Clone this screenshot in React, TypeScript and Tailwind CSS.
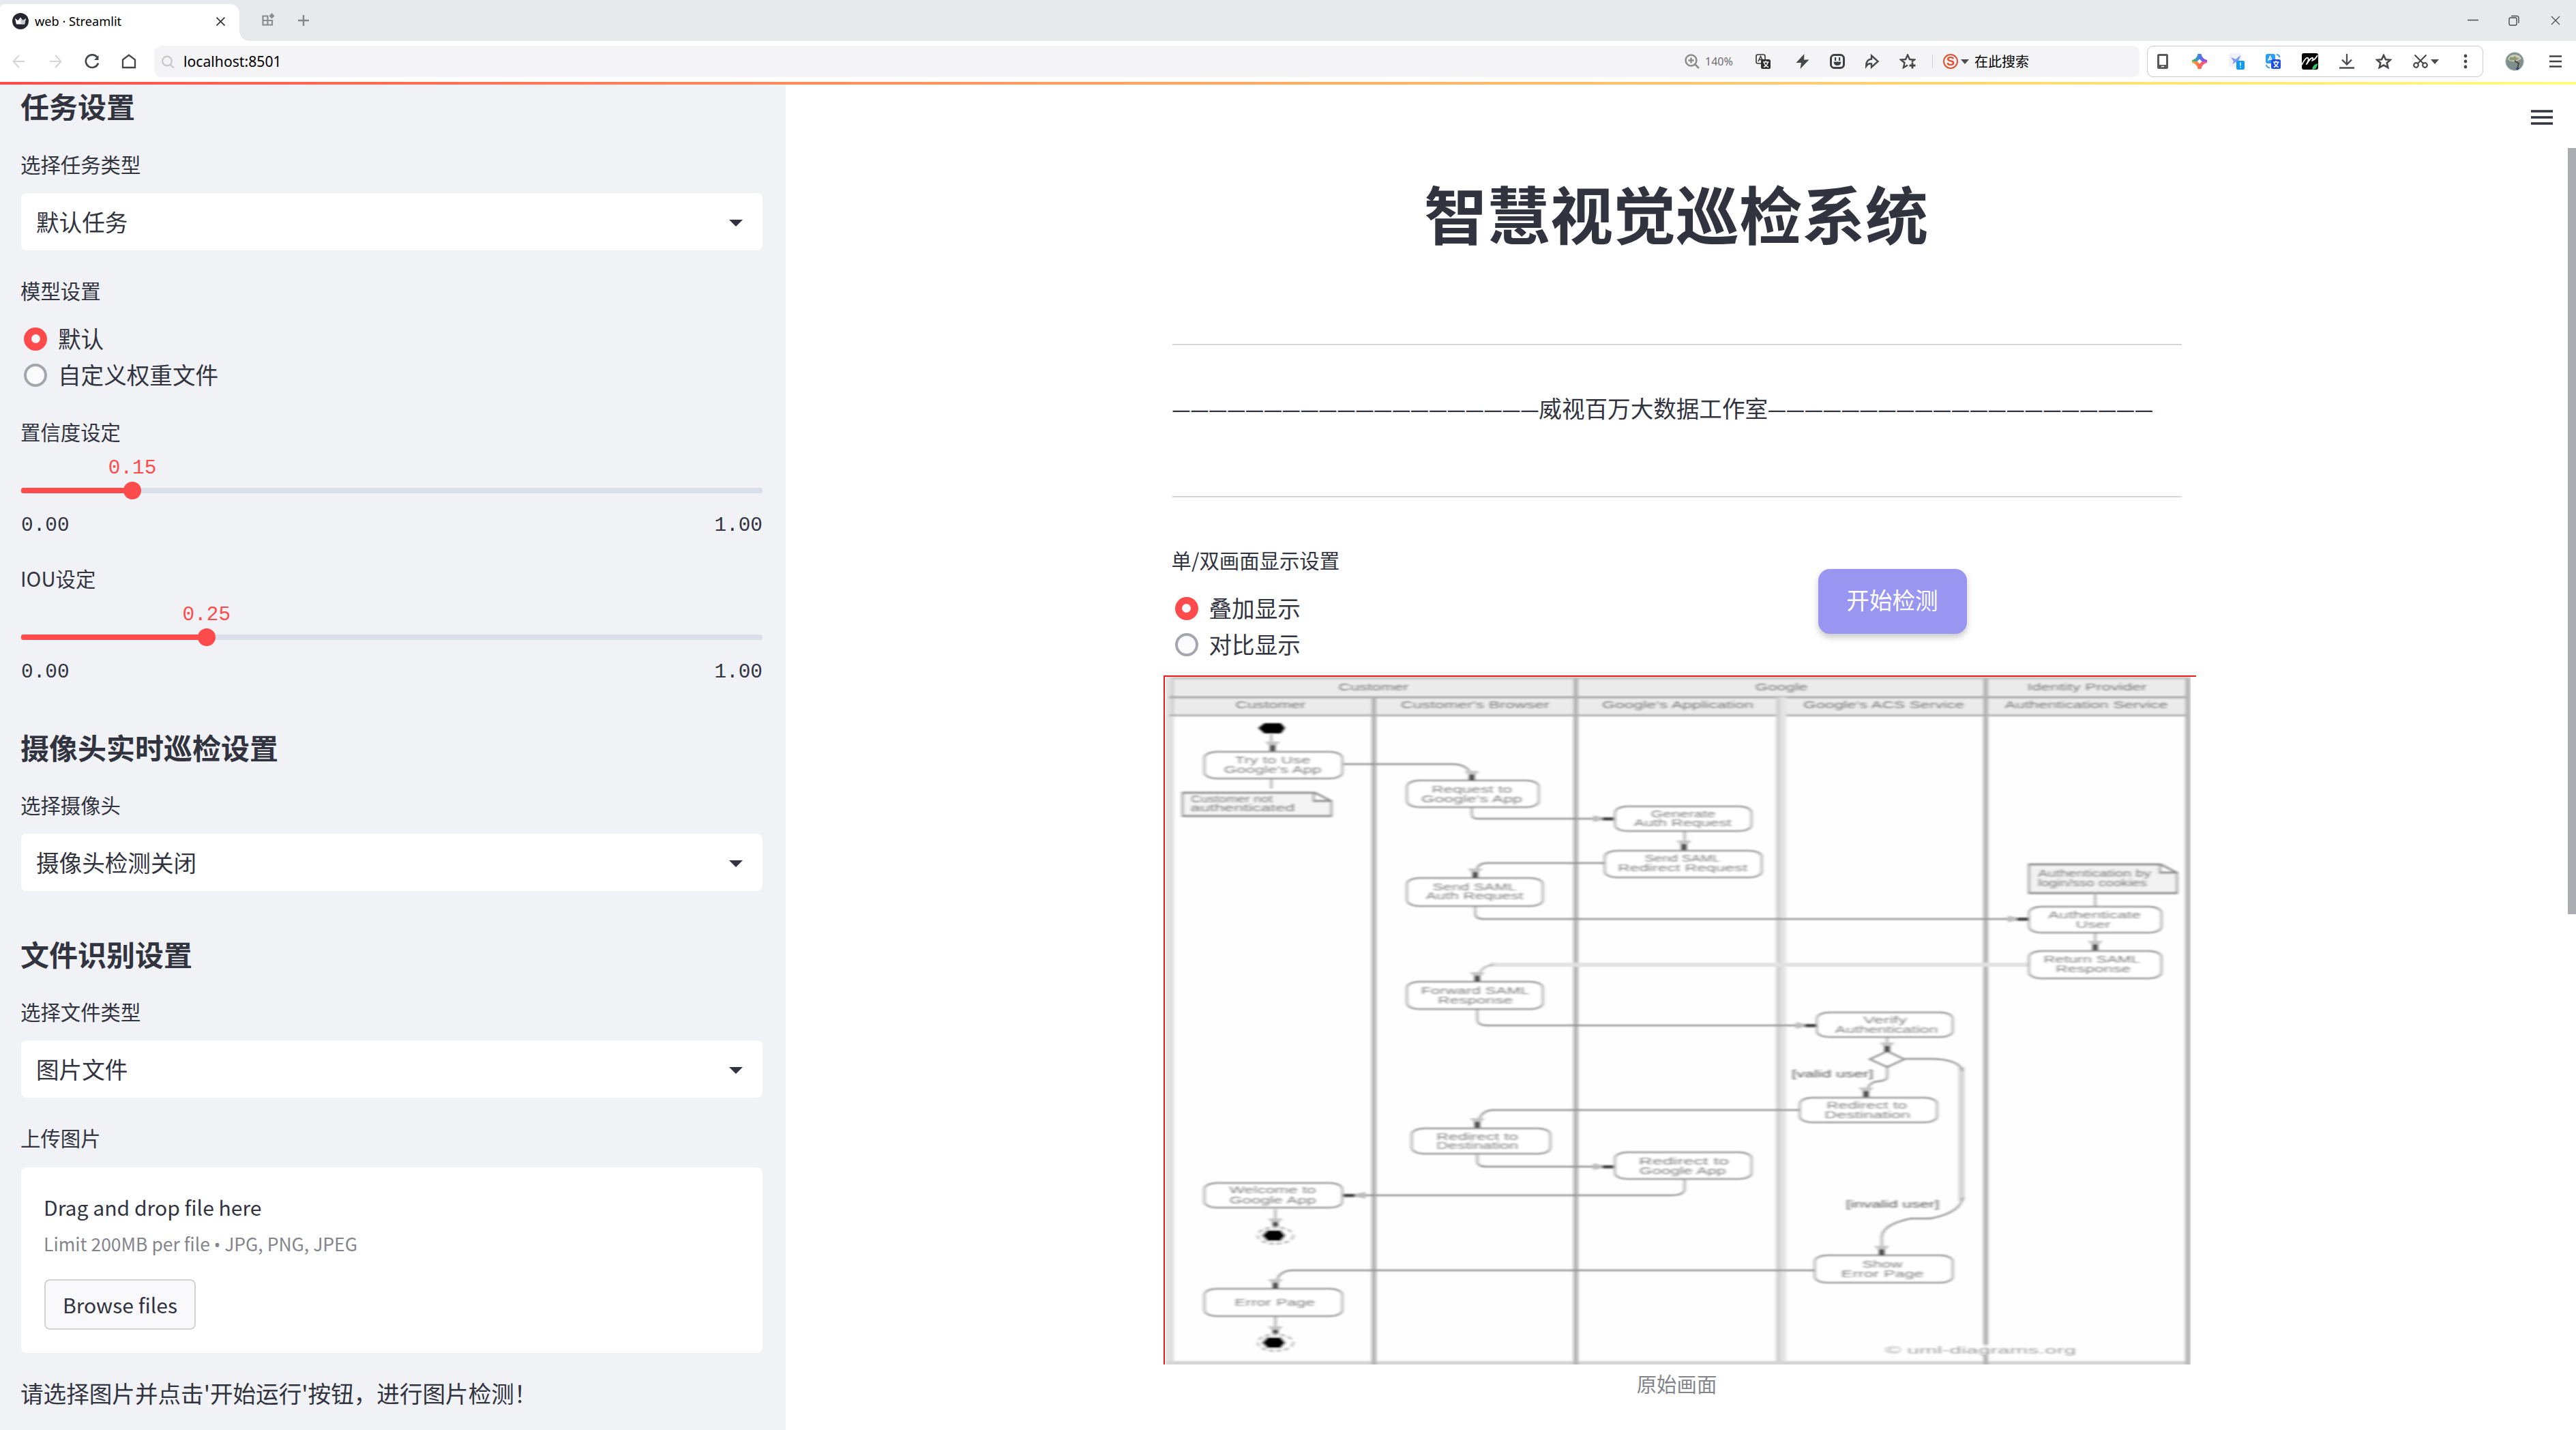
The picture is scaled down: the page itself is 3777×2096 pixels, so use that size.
import React from "react";

const UI = "font-['Noto_Sans_CJK_SC',sans-serif]";

type NodeSpec = { x1: number; y1: number; x2: number; y2: number; lines: [string, number, number, number][] };

/* Text lines: [text, centre x, centre y, width] */
const nodes: NodeSpec[] = [
  { x1: 1765, y1: 1101, x2: 1969, y2: 1142, lines: [["Try to Use", 1866, 1114, 111], ["Google's App", 1866, 1127.5, 143]] },
  { x1: 2062, y1: 1143, x2: 2257, y2: 1184, lines: [["Request to", 2158, 1157, 118], ["Google's App", 2158, 1171, 148]] },
  { x1: 2367, y1: 1181, x2: 2569, y2: 1219, lines: [["Generate", 2468, 1193, 95], ["Auth Request", 2467, 1206, 143]] },
  { x1: 2352, y1: 1246, x2: 2584, y2: 1287, lines: [["Send SAML", 2467, 1258, 111], ["Redirect Request", 2467, 1272, 190]] },
  { x1: 2062, y1: 1286, x2: 2263, y2: 1329, lines: [["Send SAML", 2162, 1300, 123], ["Auth Request", 2162, 1313, 143]] },
  { x1: 2974, y1: 1328, x2: 3170, y2: 1368, lines: [["Authenticate", 3071, 1341, 136], ["User", 3069, 1355, 51]] },
  { x1: 2974, y1: 1393, x2: 3170, y2: 1435, lines: [["Return SAML", 3067, 1406, 141], ["Response", 3069, 1420, 110]] },
  { x1: 2062, y1: 1438, x2: 2263, y2: 1480, lines: [["Forward SAML", 2163, 1452, 159], ["Response", 2163, 1466, 110]] },
  { x1: 2663, y1: 1483, x2: 2864, y2: 1521, lines: [["Verify", 2764, 1495, 64], ["Authentication", 2766, 1509, 151]] },
  { x1: 2638, y1: 1608, x2: 2841, y2: 1646, lines: [["Redirect to", 2737, 1620, 118], ["Destination", 2738, 1634, 126]] },
  { x1: 2069, y1: 1653, x2: 2274, y2: 1692, lines: [["Redirect to", 2166, 1666, 120], ["Destination", 2166, 1679, 120]] },
  { x1: 2367, y1: 1688, x2: 2569, y2: 1729, lines: [["Redirect to", 2469, 1702, 132], ["Google App", 2467, 1716, 127]] },
  { x1: 1765, y1: 1733, x2: 1969, y2: 1771, lines: [["Welcome to", 1866, 1744, 127], ["Google App", 1866, 1759, 127]] },
  { x1: 2660, y1: 1839, x2: 2864, y2: 1881, lines: [["Show", 2760, 1853, 59], ["Error Page", 2760, 1867, 121]] },
  { x1: 1765, y1: 1888, x2: 1969, y2: 1930, lines: [["Error Page", 1869, 1909, 118]] },
];

const labels: [string, number, number, number][] = [
  ["Customer", 2014, 1007, 103],
  ["Google", 2612, 1007, 77],
  ["Identity Provider", 3060, 1007, 175],
  ["Customer", 1863, 1033, 103],
  ["Customer's Browser", 2163, 1033, 218],
  ["Google's Application", 2460, 1033, 222],
  ["Google's ACS Service", 2762, 1033, 236],
  ["Authentication Service", 3059, 1033, 239],
  ["Customer not", 1806, 1171, 120],
  ["authenticated", 1822, 1184, 153],
  ["Authentication by", 3071, 1280, 166],
  ["login/sso cookies", 3068, 1294, 160],
  ["[valid user]", 2687, 1574, 120],
  ["[invalid user]", 2775, 1765, 137],
];

const edges = [
  "M1970 1120H2132Q2158 1122 2158 1143",
  "M2158 1184V1194Q2158 1200 2166 1200H2366",
  "M2470 1219V1246",
  "M2352 1265H2180Q2163 1265 2163 1286",
  "M2163 1329V1340Q2164 1347 2174 1347H2974",
  "M3072 1311V1328M3072 1368V1393",
  "M2166 1480V1496Q2168 1503 2180 1503H2663",
  "M2767 1521V1541",
  "M2767 1564V1578Q2767 1584 2754 1585Q2736 1586 2736 1608",
  "M2638 1627H2188Q2168 1628 2166 1653",
  "M2166 1692V1704Q2168 1710 2180 1710H2366",
  "M2470 1729V1744Q2468 1752 2450 1752H1969",
  "M1870 1772V1800M1870 1930V1958",
  "M2660 1862H1892Q1871 1864 1870 1888",
  "M2794 1552H2830Q2872 1552 2878 1570M2878 1755Q2874 1778 2830 1786H2802Q2762 1794 2759 1812V1840",
  "M1864 1076V1101M1864 1142V1156",
];

const downHeads: [number, number][] = [
  [1866, 1100], [2158, 1143], [2469, 1245], [2163, 1286], [3072, 1392], [2166, 1438],
  [2767, 1541], [2736, 1607], [2166, 1652], [1870, 1799], [1870, 1888], [1870, 1957], [2759, 1839],
];
const rightHeads: [number, number][] = [[2366, 1200], [2974, 1347], [2663, 1503], [2366, 1710]];

function DText({ t, x, y, w, fill = "#525252" }: { t: string; x: number; y: number; w: number; fill?: string }) {
  return (
    <text x={x - w / 2} y={y + 5} textLength={w} lengthAdjust="spacingAndGlyphs" fontSize={14} fill={fill} className="font-['Liberation_Sans',sans-serif]">
      {t}
    </text>
  );
}

function Diagram() {
  return (
    <svg viewBox="1706 990 1514 1010" className="block h-[1010px] w-[1514px]">
      <defs>
        <filter id="soft" x="0" y="0" width="1" height="1" filterUnits="objectBoundingBox">
          <feGaussianBlur stdDeviation="2.2 0.9" />
        </filter>
      </defs>
      <rect x="1708" y="992" width="1512" height="1008" fill="#fefefe" />
      <g filter="url(#soft)">
        <rect x="1709" y="993" width="1503" height="56" fill="#ebebeb" />
        <rect x="1709" y="992" width="1503" height="4" fill="#c9c9c9" />
        <rect x="1709" y="993" width="12" height="1007" fill="#e0e0e0" />
        <rect x="1718" y="993" width="3" height="56" fill="#c6c6c6" />
        <rect x="1714" y="1020.5" width="1498" height="3" fill="#a4a4a4" />
        <rect x="1714" y="1047" width="1498" height="3" fill="#b2b2b2" />
        <rect x="2604" y="1022" width="7" height="978" fill="#d2d2d2" />
        <rect x="2611" y="1022" width="8" height="978" fill="#e4e4e4" />
        <rect x="1709" y="1995" width="1503" height="6" fill="#d4d4d4" />
        <rect x="2011" y="1021" width="7" height="980" fill="#b1b1b1" />
        <rect x="2307" y="994" width="7" height="1007" fill="#b1b1b1" />
        <rect x="2908" y="994" width="7" height="1007" fill="#b1b1b1" />
        <rect x="3204" y="994" width="8" height="1007" fill="#b7b7b7" />

        <path d="M2974 1414H2185" stroke="#e2e2e2" strokeWidth="6" fill="none" />
        <path d="M2190 1414Q2168 1416 2166 1438" stroke="#bbb" strokeWidth="3" fill="none" />
        <path d="M2876 1564V1760" stroke="#d6d6d6" strokeWidth="9" fill="none" />
        {edges.map((d) => (
          <path key={d} d={d} fill="none" stroke="#929292" strokeWidth="2.400" />
        ))}
        {nodes.map((n) => (
          <rect key={`${n.x1}-${n.y1}`} x={n.x1 + 1} y={n.y1 + 1} width={n.x2 - n.x1 - 2} height={n.y2 - n.y1 - 2} rx="18" ry="9" fill="#fff" stroke="#949494" strokeWidth="2.600" />
        ))}
        <path d="M1734 1162H1928L1952 1174V1196H1734ZM1926 1162V1174H1952" fill="#f4f4f4" stroke="#8e8e8e" strokeWidth="2.800" />
        <path d="M2975 1267H3168L3192 1279V1309H2975ZM3167 1267V1279H3192" fill="#f2f2f2" stroke="#8e8e8e" strokeWidth="2.800" />
        <path d="M2767 1541L2792 1552.5L2767 1564L2742 1552.5Z" fill="#fff" stroke="#8c8c8c" strokeWidth="2.600" />

        {downHeads.map(([x, y]) => (
          <g key={`${x}-${y}`}>
            <path d={`M${x - 11} ${y - 13}H${x + 11}L${x} ${y - 2}Z`} fill="#c4c4c4" />
            <rect x={x - 4} y={y - 8} width="8" height="9" fill="#484848" />
          </g>
        ))}
        {rightHeads.map(([x, y]) => (
          <g key={`${x}-${y}`}>
            <path d={`M${x - 30} ${y - 5}V${y + 5}L${x - 8} ${y}Z`} fill="#bdbdbd" />
            <rect x={x - 17} y={y - 2} width="17" height="4.5" fill="#3c3c3c" />
          </g>
        ))}
        <path d="M2002 1747V1757L1978 1752Z" fill="#bdbdbd" />
        <rect x="1970" y="1750" width="17" height="4.5" fill="#3c3c3c" />

        <path d="M1845 1067L1854 1060H1878L1884 1067L1878 1075H1854Z" fill="#000" />
        {[1811, 1968].map((y) => (
          <g key={y}>
            <ellipse cx="1870" cy={y} rx="26" ry="12" fill="#fff" stroke="#b8b8b8" strokeWidth="3" strokeDasharray="7 4" />
            <path d={`M1850 ${y}L1858 ${y - 8}H1878L1885 ${y}L1878 ${y + 8}H1858Z`} fill="#000" />
          </g>
        ))}
        {nodes.flatMap((n) => n.lines).map(([t, x, y, w]) => (
          <DText key={`${t}-${x}-${y}`} t={t} x={x} y={y} w={w} />
        ))}
        {labels.map(([t, x, y, w]) => (
          <DText key={`${t}-${x}-${y}`} t={t} x={x} y={y} w={w} />
        ))}
        <rect x="2762" y="1971" width="284" height="16" fill="#fefefe" opacity="0.8" />
        <DText t="© uml-diagrams.org" x={2904} y={1979} w={280} fill="#909090" />
      </g>
      <path d="M1707 2000V991H3220" fill="none" stroke="#ee1c1c" strokeWidth="2" />
    </svg>
  );
}

function Heading({ children, className }: { children: string; className: string }) {
  return <h2 className={`h-[50px] -translate-x-px text-[42px] leading-[44px] font-bold ${className}`}>{children}</h2>;
}

function Label({ children, className = "" }: { children: string; className?: string }) {
  return <div className={`h-[40px] -translate-x-px text-[29.4px] leading-[37px] ${className}`}>{children}</div>;
}

function Select({ value }: { value: string }) {
  return (
    <div className="mt-[21px] flex h-[84px] items-center justify-between rounded-[8px] bg-white pr-[29px] pl-[22px]">
      <span className="text-[33.6px] leading-[80px]">{value}</span>
      <svg viewBox="0 0 20 10" className="mt-1 h-[10px] w-[20px]"><path d="M0 0H20L10 10Z" fill="#31333F" /></svg>
    </div>
  );
}

function Radio({ label, checked }: { label: string; checked?: boolean }) {
  return (
    <div className="flex h-[53px] items-center pl-[4px]">
      {checked ? (
        <span className="flex size-[34px] items-center justify-center rounded-full bg-[#ff4b4b]">
          <span className="size-[13px] rounded-full bg-[#f6f7f9]" />
        </span>
      ) : (
        <span className="size-[34px] rounded-full border-4 border-[#a5a6ad] bg-[#fbfbfd]" />
      )}
      <span className="ml-[16px] text-[33.6px] leading-[50px] -translate-y-[1px]">{label}</span>
    </div>
  );
}

function Slider({ value }: { value: number }) {
  return (
    <div className="font-['Liberation_Mono',monospace] text-[29.4px]">
      <div className="mt-[12px] h-[36px] leading-[41px] text-[#ff4b4b]">
        <span className="inline-block -translate-x-1/2" style={{ marginLeft: `${value * 100}%` }}>{value.toFixed(2)}</span>
      </div>
      <div className="mt-[4px] flex h-[26px] items-center">
        <div className="h-[8px] rounded-l-[3px] bg-[#ff4b4b]" style={{ width: `${value * 100}%` }} />
        <div className="relative z-10 -mx-[13px] size-[26px] rounded-full bg-[#ff4b4b]" />
        <div className="h-[8px] flex-1 rounded-r-[3px] bg-[#dbdfe9]" />
      </div>
      <div className="mt-[18px] flex h-[36px] justify-between leading-[42px]">
        <span>0.00</span>
        <span>1.00</span>
      </div>
    </div>
  );
}

const INK = "#47484b";

function TabBar() {
  return (
    <div className="flex h-[60px] bg-[#e8e9ed]">
      <div className="relative mt-[6px] flex h-[54px] w-[351px] items-center rounded-tl-[6px] rounded-tr-[14px] bg-white pb-[4px] pl-[18px]">
        <svg viewBox="0 0 24 24" className="size-[24px]">
          <circle cx="12" cy="12" r="12" fill="#262730" />
          <path d="M4 8L8.5 11L12 6.500L15.500 11L20 8L18 16.500H6Z" fill="#fff" />
          <path d="M12 6.500L15.500 11L20 8L18 16.500H13Z" fill="#c9c9cd" />
        </svg>
        <span className="ml-[9px] w-[266px] font-['Noto_Sans',sans-serif] text-[18.2px] leading-[24px] text-black">web · Streamlit</span>
        <svg viewBox="0 0 12 12" className="size-[13px]"><path d="M0.500 0.500L11.500 11.500M11.500 0.500L0.500 11.500" stroke="#333" strokeWidth="1.500" /></svg>
        <svg viewBox="0 0 15 15" className="absolute bottom-0 left-full size-[15px]"><path d="M0 0Q1 14 15 15H0Z" fill="#fff" /></svg>
      </div>
      <svg viewBox="0 0 20 20" className="mt-[19px] ml-[33px] size-[20px]" fill="none" stroke="#8b8c90" strokeWidth="2.200">
        <path d="M1.500 4.500H8.500V17.500H1.500ZM1.500 11H15V17.500H8.500" />
        <path d="M14.500 0L18.500 4.500L14.500 8.500L10.500 4.500Z" fill="#8b8c90" stroke="none" />
      </svg>
      <svg viewBox="0 0 16 16" className="mt-[22px] ml-[33px] size-[16px]"><path d="M8 0V16M0 8H16" stroke="#858689" strokeWidth="2.400" /></svg>
      <div className="mr-[23px] ml-auto flex items-start pt-[22px]">
        <svg viewBox="0 0 16 16" className="size-[16px]"><path d="M0 7.500H16" stroke="#4b4b4f" strokeWidth="1.500" /></svg>
        <svg viewBox="0 0 16 16" className="ml-[44px] size-[16px]" fill="none" stroke="#4b4b4f" strokeWidth="1.400">
          <rect x="1" y="4" width="11" height="11" rx="2" />
          <path d="M4 1.500H12Q15 1.500 15 4.500V12" />
        </svg>
        <svg viewBox="0 0 14 14" className="mt-[1px] ml-[46px] size-[14px]"><path d="M1 1L13 13M13 1L1 13" stroke="#4b4b4f" strokeWidth="1.300" /></svg>
      </div>
    </div>
  );
}

function Toolbar() {
  return (
    <div className="flex h-[60px] items-center bg-white pl-[18px]">
      <svg viewBox="0 0 19 20" className="h-[20px] w-[19px]" fill="none" stroke="#d5d5d8" strokeWidth="2"><path d="M18 10H2M10 1L1.500 10L10 19" /></svg>
      <svg viewBox="0 0 19 20" className="ml-[35px] h-[20px] w-[19px]" fill="none" stroke="#d5d5d8" strokeWidth="2"><path d="M1 10H17M9 1L17.500 10L9 19" /></svg>
      <svg viewBox="0 0 22 22" className="ml-[33px] size-[22px]" fill="none" stroke="#454648" strokeWidth="2.600">
        <path d="M20 13.500A9.300 9.300 0 1 1 18.500 5" />
        <path d="M20.500 2V9H14Z" fill="#454648" stroke="none" />
      </svg>
      <svg viewBox="0 0 22 22" className="ml-[32px] size-[22px]" fill="none" stroke="#454648" strokeWidth="2.300"><path d="M2 8.500L11 1.800L20 8.500V20H2Z" /></svg>

      <div className="ml-[26px] flex h-[46px] w-[2911px] items-center rounded-[10px] bg-[#f4f4f7] pl-[11px]">
        <svg viewBox="0 0 19 19" className="size-[19px]" fill="none" stroke="#c6c7ca" strokeWidth="2.200"><circle cx="8" cy="8.500" r="6.800" /><path d="M12.500 13.500L18 18.500" /></svg>
        <span className="ml-[13px] font-['Noto_Sans',sans-serif] text-[21.2px] leading-[30px] text-black">localhost:8501</span>
        <div className="ml-auto flex w-[667px] items-center">
          <svg viewBox="0 0 22 22" className="size-[22px]" fill="none" stroke="#8a8b8d" strokeWidth="2.500"><circle cx="9.500" cy="9.500" r="8" /><path d="M9.500 5.500V13.500M5.500 9.500H13.500M15.500 15.500L21 21" /></svg>
          <span className="ml-[8px] w-[41px] font-['Noto_Sans',sans-serif] text-[16px] leading-[22px] text-[#6c6d70]">140%</span>
          <svg viewBox="0 0 22 22" className="ml-[33px] size-[22px]">
            <rect x="1" y="1" width="13" height="13" rx="2.500" fill="none" stroke="#333" strokeWidth="1.600" />
            <path d="M4 11L7.500 3.500L11 11M5.300 8.500H9.800" fill="none" stroke="#333" strokeWidth="1.500" />
            <rect x="8" y="8" width="14" height="14" rx="2.500" fill="#2e2e30" />
            <path d="M11 12H19.500M15.200 10V12M12 19.500Q17 17 18 12.500M12.500 13Q14 17.500 19 19.500" fill="none" stroke="#fff" strokeWidth="1.400" />
          </svg>
          <svg viewBox="0 0 20 22" className="ml-[37px] h-[22px] w-[20px]"><path d="M12.500 0L0.500 13H8L6.500 22L19.500 8.500H12Z" fill={INK} /></svg>
          <svg viewBox="0 0 22 22" className="ml-[30px] size-[22px]">
            <rect x="1.500" y="1.500" width="19" height="19" rx="5" fill="none" stroke="#3f4043" strokeWidth="3" />
            <rect x="7" y="5" width="2.200" height="5" fill="#3f4043" /><rect x="13" y="5" width="2.200" height="5" fill="#3f4043" />
            <path d="M5.500 11.500H16.500Q16 17 11 17Q6 17 5.500 11.500Z" fill="#3f4043" />
          </svg>
          <svg viewBox="0 0 22 22" className="ml-[29px] size-[22px]" fill="none" stroke={INK} strokeWidth="2.400" strokeLinejoin="miter">
            <path d="M10 2.500L19.500 11L10 19.500V14.500Q5 13.500 2.200 18Q2 8 10 7.500Z" />
          </svg>
          <svg viewBox="0 0 24 22" className="ml-[29px] h-[22px] w-[24px]" fill="none" stroke={INK} strokeWidth="2.400">
            <path d="M12 16.500L6 20L7.500 13L2 8.500L9 8L12 1.500L15 8L22 8.500L18 11.500" />
            <path d="M19 12.500V21.500M14.500 17H23.500" strokeWidth="2.800" />
          </svg>
          <div className="ml-[24px] h-[20px] w-px bg-[#cfd0d4]" />
          <div className="ml-[15px] flex size-[22px] items-center justify-center rounded-full border-2 border-[#e2512d]">
            <span className="font-['Liberation_Sans',sans-serif] text-[18px] leading-[18px] font-bold text-[#e2512d]">S</span>
          </div>
          <svg viewBox="0 0 12 7" className="ml-[4px] h-[7px] w-[12px]"><path d="M0 0H12L6 7Z" fill="#4b4b4d" /></svg>
          <span className={`ml-[8px] text-[20px] leading-[30px] text-black whitespace-nowrap ${UI}`}>在此搜索</span>
        </div>
      </div>

      <div className="ml-[11px] flex h-[46px] w-[493px] items-center rounded-[9px] border border-[#c6cad4] pl-[14px]">
        <svg viewBox="0 0 16 22" className="h-[22px] w-[16px]"><rect x="1.500" y="1.500" width="13" height="19" rx="1" fill="none" stroke="#58595b" strokeWidth="3" /><path d="M1 18H15" stroke="#58595b" strokeWidth="4" /><path d="M6 18.500H10" stroke="#fff" strokeWidth="1.500" /></svg>
        <svg viewBox="0 0 22 22" className="ml-[35px] size-[22px]">
          <defs>
            <linearGradient id="spark" x1="0" y1="0.500" x2="1" y2="0.500"><stop offset="0" stopColor="#4cc04a" /><stop offset="0.500" stopColor="#3f7df0" /><stop offset="1" stopColor="#b13be0" /></linearGradient>
            <linearGradient id="spark2" x1="0" y1="0" x2="1" y2="0"><stop offset="0" stopColor="#f9b233" /><stop offset="0.500" stopColor="#ff6a4d" /><stop offset="1" stopColor="#e455b6" /></linearGradient>
          </defs>
          <path d="M8.500 0H13.500Q14.500 7 22 9V11H0V9Q7.500 7 8.500 0Z" fill="url(#spark)" />
          <path d="M0 11H22V13Q14.500 15 13.500 22H8.500Q7.500 15 0 13Z" fill="url(#spark2)" />
          <path d="M11 7.500L14.500 11L11 14.500L7.500 11Z" fill="#fff" />
        </svg>
        <svg viewBox="0 0 23 24" className="ml-[32px] h-[24px] w-[23px]">
          <rect width="19" height="20" rx="3" fill="#f0f3fd" />
          <path d="M3 6L10 9L17 3Q15 13 10 13L5 16L7 12Z" fill="#7d98f7" />
          <rect x="11" y="11" width="12" height="13" rx="2" fill="#0f9bf0" />
          <path d="M17 13.500V18.500M17 20V21.500" stroke="#fff" strokeWidth="1.400" />
        </svg>
        <svg viewBox="0 0 22 22" className="ml-[31px] size-[22px]">
          <rect width="14" height="14" rx="3" fill="#2d9df5" />
          <path d="M3.500 10L6.500 3.500L9.500 10M4.500 8H8.500" fill="none" stroke="#fff" strokeWidth="1.500" />
          <path d="M16 1Q20 1.500 20.500 5M1 16Q1.500 20 6 20.500" fill="none" stroke="#2d9df5" strokeWidth="2" />
          <rect x="8" y="8" width="14" height="14" rx="2.500" fill="#1d50e0" />
          <path d="M11 12H19.500M15.200 10V12M12 19.500Q17 17 18 12.500M12.500 13Q14 17.500 19 19.500" fill="none" stroke="#fff" strokeWidth="1.500" />
        </svg>
        <svg viewBox="0 0 24 24" className="ml-[31px] size-[24px]">
          <rect width="24" height="24" rx="3" fill="#000" />
          <path d="M0 17Q6 5 9 7Q11 9 7 16Q14 5 16 7Q17 10 15 11Q20 9 23 3" fill="none" stroke="#fff" strokeWidth="1.800" strokeLinejoin="round" />
          <path d="M15 24Q16 16 24 15L20 23Z" fill="#2fd06a" />
        </svg>
        <svg viewBox="0 0 22 22" className="ml-[31px] size-[22px]" fill="none" stroke="#4a4b4e" strokeWidth="2.300"><path d="M11 0V15M4 8.500L11 15.500L18 8.500M0 20.500H22" /></svg>
        <svg viewBox="0 0 24 22" className="ml-[31px] h-[22px] w-[24px]" fill="none" stroke={INK} strokeWidth="2.600"><path d="M12 2L15 8.300L21.800 8.800L16.700 13.200L18.300 20L12 16.500L5.700 20L7.300 13.200L2.200 8.800L9 8.300Z" /></svg>
        <svg viewBox="0 0 22 22" className="ml-[31px] size-[22px]" fill="none" stroke={INK} strokeWidth="2.200"><path d="M2.500 1.500L15 14M19.500 1.500L7 14" /><circle cx="4.500" cy="16.500" r="3.300" /><circle cx="17.500" cy="16.500" r="3.300" /></svg>
        <svg viewBox="0 0 12 7" className="ml-[4px] h-[7px] w-[12px]"><path d="M0 0H12L6 7Z" fill="#4b4b4d" /></svg>
        <svg viewBox="0 0 6 22" className="ml-[36px] h-[22px] w-[6px]" fill={INK}><circle cx="3" cy="3" r="2.400" /><circle cx="3" cy="11" r="2.400" /><circle cx="3" cy="19" r="2.400" /></svg>
      </div>

      <svg viewBox="0 0 28 28" className="ml-[32px] size-[28px]">
        <circle cx="14" cy="14" r="13.500" fill="#7e908e" stroke="#d5d8d6" />
        <path d="M4 11Q6 4 13 4Q21 3 24 10Q18 14 15 14Q8 15 4 11Z" fill="#c9cbb5" />
        <path d="M8 7Q12 10 14 6Q17 10 21 9Q16 14 12 12Q9 14 6 11Z" fill="#8f9a72" />
        <path d="M14 13L20 17L18 24" fill="none" stroke="#4f4234" strokeWidth="1.800" />
        <path d="M15 25Q18 22 22 24L18 27Z" fill="#2d4a86" />
      </svg>
      <svg viewBox="0 0 18 18" className="ml-[37px] size-[18px]"><path d="M0 1.500H18M0 9H18M0 16.500H18" stroke="#404144" strokeWidth="2.600" /></svg>
    </div>
  );
}

function Sidebar() {
  return (
    <aside className="h-full w-[1152px] shrink-0 bg-[#f0f2f6] pt-[9px] pr-[34px] pl-[31px]">
      <Heading className="">任务设置</Heading>
      <Label className="mt-[39px]">选择任务类型</Label>
      <Select value="默认任务" />
      <Label className="mt-[40px]">模型设置</Label>
      <div className="mt-[23px]">
        <Radio label="默认" checked />
        <Radio label="自定义权重文件" />
      </div>
      <Label className="mt-[38px]">置信度设定</Label>
      <Slider value={0.15} />
      <Label className="mt-[43px]">IOU设定</Label>
      <Slider value={0.25} />
      <Heading className="mt-[72px]">摄像头实时巡检设置</Heading>
      <Label className="mt-[38px]">选择摄像头</Label>
      <Select value="摄像头检测关闭" />
      <Heading className="mt-[70px]">文件识别设置</Heading>
      <Label className="mt-[38px]">选择文件类型</Label>
      <Select value="图片文件" />
      <Label className="mt-[40px]">上传图片</Label>
      <div className="mt-[22px] flex h-[272px] flex-col items-start rounded-[8px] bg-white pt-[34px] pl-[34px]">
        <div className="h-[50px] -translate-x-px text-[30.1px] leading-[49px]">Drag and drop file here</div>
        <div className="mt-[6px] h-[44px] -translate-x-px text-[26.5px] leading-[44px] whitespace-pre text-[#84858c]">
          Limit 200MB per file <span className="font-['Noto_Sans',sans-serif] text-[25px]">•</span> JPG, PNG, JPEG
        </div>
        <button className="mt-[30px] h-[74px] w-[222px] rounded-[8px] border-2 border-[#d2d3d7] bg-[#f9f9fb] text-[30.1px] leading-[65px]">Browse files</button>
      </div>
      <div className="mt-[35px] -translate-x-px text-[33.6px] leading-[47px] whitespace-nowrap">请选择图片并点击'开始运行'按钮，进行图片检测！</div>
    </aside>
  );
}

function Dashes({ n }: { n: number }) {
  return <span className="font-['Noto_Sans',sans-serif] text-[26.9px]">{"—".repeat(n)}</span>;
}

function Main() {
  return (
    <main className="flex h-full w-[2613px] flex-col items-center">
      <div className="w-[1480px]">
        <h1 className="mt-[136px] h-[112px] -translate-x-px text-center text-[92.4px] leading-[102px] font-bold">智慧视觉巡检系统</h1>
        <div className="mt-[132px] h-[2px] bg-[#d5d6d8]" />
        <div className="mt-[69px] flex h-[50px] items-center text-[33.6px] leading-[46px] whitespace-nowrap">
          <Dashes n={20} />
          <span className="-translate-y-[2px]">威视百万大数据工作室</span>
          <Dashes n={21} />
        </div>
        <div className="mt-[102px] h-[2px] bg-[#d5d6d8]" />
        <div className="mt-[73px] flex h-[188px]">
          <div className="w-[947px]">
            <Label>单/双画面显示设置</Label>
            <div className="mt-[23px]">
              <Radio label="叠加显示" checked />
              <Radio label="对比显示" />
            </div>
          </div>
          <button className="mt-[32px] h-[95px] w-[218px] rounded-[17px] bg-[#9896f1] pb-[4px] text-[33.6px] text-white shadow-[0_5px_10px_rgba(0,0,0,0.22)]">开始检测</button>
        </div>
      </div>
      <div className="w-[1505px]">
        <div className="w-[1514px]"><Diagram /></div>
      </div>
      <div className="mt-[6px] h-[44px] text-[29.4px] leading-[42px] text-[#84858c]">原始画面</div>
    </main>
  );
}

export default function App() {
  return (
    <div className={`flex h-[2096px] w-[3777px] flex-col overflow-hidden bg-white text-[#31333F] ${UI}`}>
      <TabBar />
      <Toolbar />
      <div className="h-[4px] bg-linear-to-r from-[#ff4b4b] to-[#fffd80]" />
      <div className="flex h-[1972px]">
        <Sidebar />
        <Main />
        <div className="relative w-[12px] pt-[93px]">
          <div className="h-[1123px] w-[12px] bg-[#acadb3]" />
          <svg viewBox="0 0 32 22" className="absolute top-[37px] right-[34px] h-[22px] w-[32px]"><path d="M0 2H32M0 11H32M0 20H32" stroke="#31333F" strokeWidth="3.700" /></svg>
        </div>
      </div>
    </div>
  );
}
